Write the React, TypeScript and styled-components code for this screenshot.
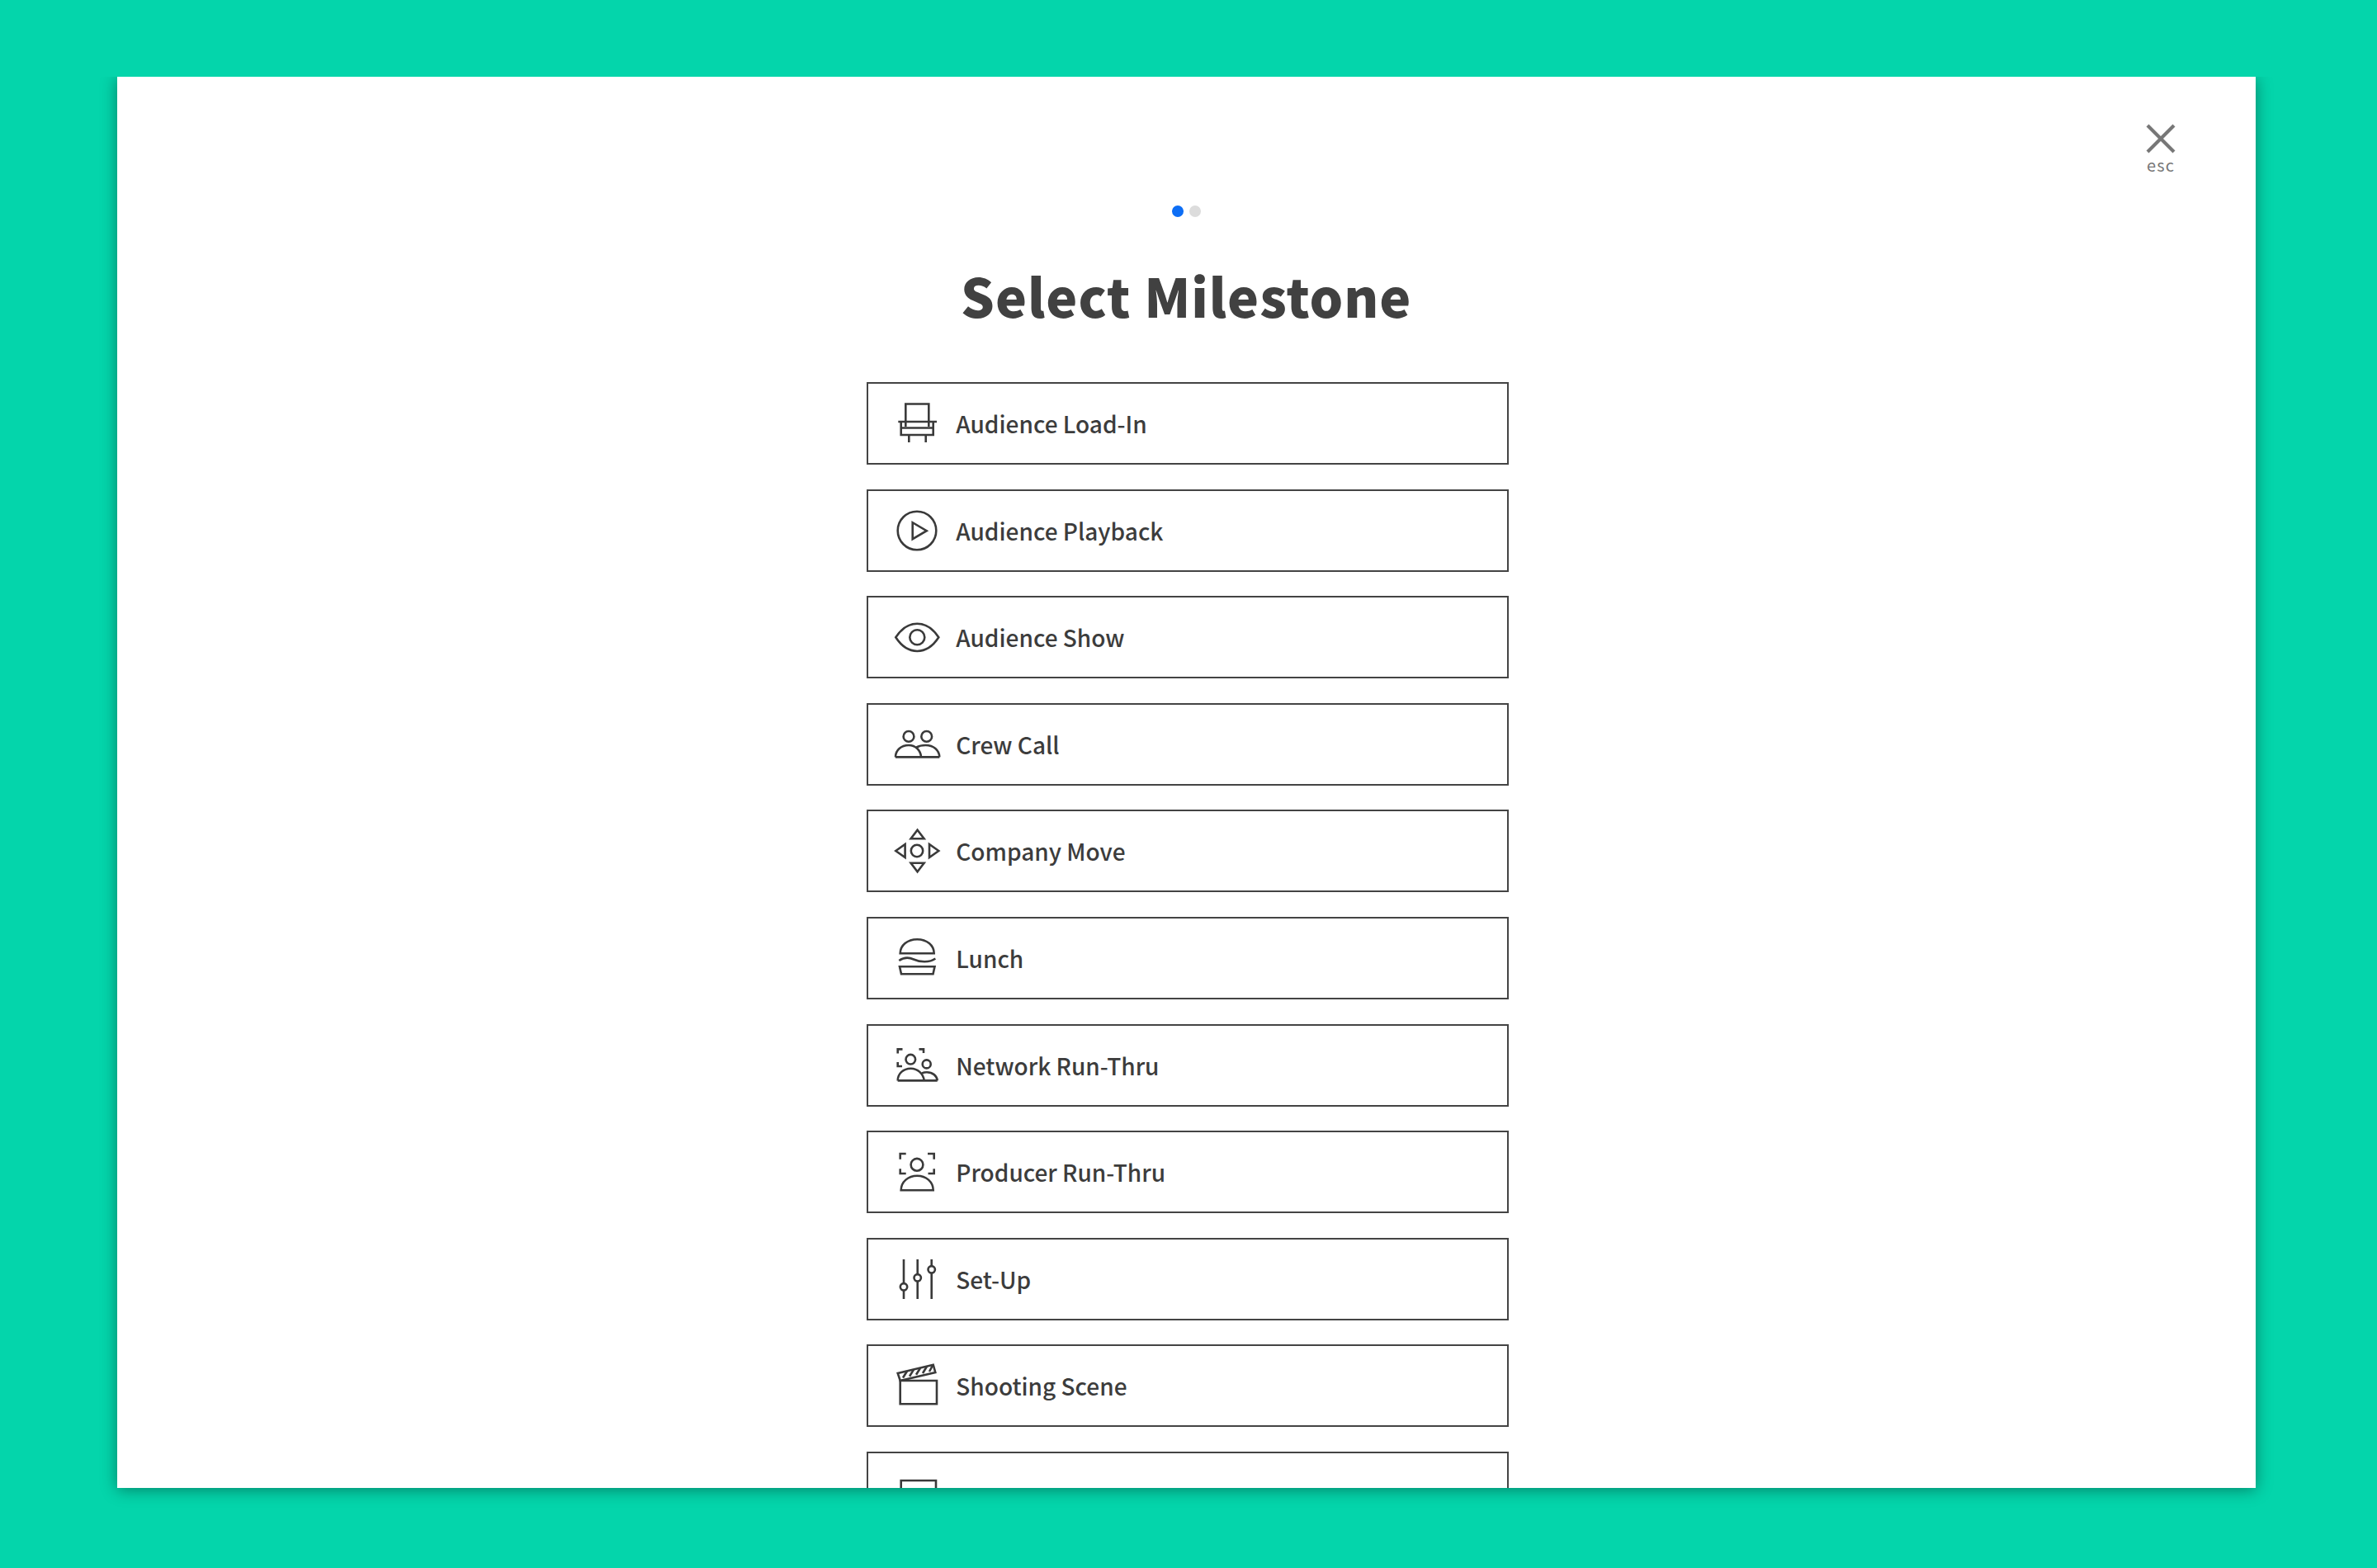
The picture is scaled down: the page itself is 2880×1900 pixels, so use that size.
import React from 'react';
import styled, { createGlobalStyle } from 'styled-components';

const GlobalStyle = createGlobalStyle`
  html, body {
    margin: 0;
    padding: 0;
  }
  body {
    background: #04d5ab;
    font-family: "Noto Sans CJK JP", "Noto Sans", sans-serif;
  }
`;

const Page = styled.div`
  width: 2880px;
  height: 1900px;
  padding: 93px 147px 97px 141.5px;
  box-sizing: border-box;
  overflow: hidden;
  background: #04d5ab;
`;

const Modal = styled.div`
  position: relative;
  height: 100%;
  background: #fff;
  overflow: hidden;
  box-shadow: 0 2px 18px rgba(0, 0, 0, 0.4);
  display: flex;
  flex-direction: column;
  align-items: center;
  padding-top: 156px;
  box-sizing: border-box;
  clip-path: inset(0 -40px -40px -40px);
`;

const CloseButton = styled.div`
  position: absolute;
  top: 57px;
  right: 90px;
  width: 50px;
  display: flex;
  flex-direction: column;
  align-items: center;
  color: #777;
`;

const CloseLabel = styled.span`
  font-size: 20px;
  line-height: 24px;
  letter-spacing: 1.2px;
  margin-top: 2px;
`;

const Dots = styled.div`
  display: flex;
  gap: 7px;
`;

const Dot = styled.span<{ $active?: boolean }>`
  width: 14px;
  height: 14px;
  border-radius: 50%;
  background: ${({ $active }) => ($active ? '#0d6ef5' : '#dcdcdc')};
`;

const Title = styled.h1`
  margin: 50px 0 0;
  height: 88px;
  font-size: 64px;
  line-height: 88px;
  font-weight: 900;
  letter-spacing: 1px;
  color: #414141;
`;

const List = styled.div`
  margin-top: 62px;
  margin-left: 4px;
  display: flex;
  flex-direction: column;
  gap: 29.6px;
  flex-shrink: 0;
`;

const Row = styled.div`
  width: 778px;
  height: 100px;
  box-sizing: border-box;
  border: 2px solid #444;
  display: flex;
  align-items: center;
  flex-shrink: 0;
  padding-left: 29px;
  gap: 17px;
  background: #fff;
`;

const IconBox = styled.svg`
  width: 60px;
  height: 60px;
  flex-shrink: 0;
  fill: none;
  stroke: #3a3a3a;
  stroke-width: 2.6;
`;

const Label = styled.span`
  font-size: 28px;
  line-height: 40px;
  font-weight: 500;
  color: #3c3c3c;
`;

const icons: Record<string, React.ReactNode> = {
  chair: (
    <>
      <path d="M16.3 34V6.5H44.3V34" />
      <path d="M7.3 28H54" />
      <path d="M10.7 28V44H49.7V28" />
      <path d="M10.7 35.5H49.7" />
      <path d="M20.3 44V53M40.7 44V53" />
    </>
  ),
  play: (
    <>
      <circle cx="30" cy="30" r="23.3" />
      <path d="M24.7 20.2V40.2L41.7 30.2Z" />
    </>
  ),
  eye: (
    <>
      <path d="M4.3 30.3C11 20 20 13.8 30.3 13.8C40.6 13.8 49.6 20 56.3 30.3C49.6 40.6 40.6 47 30.3 47C20 47 11 40.6 4.3 30.3Z" />
      <circle cx="30.3" cy="30.3" r="9" />
    </>
  ),
  crew: (
    <>
      <circle cx="20" cy="20.4" r="6.4" />
      <circle cx="41.7" cy="20.4" r="6.4" />
      <path d="M4 45.4H57.3" />
      <path d="M4 45.4C4 37 11 31 20 31C28 31 34.5 37 35 45.4" />
      <path d="M29.5 33.5C32.5 31.8 36.5 31 40.5 31C50 31 57 37 57.3 45.4" />
    </>
  ),
  move: (
    <>
      <circle cx="30" cy="30" r="7.2" />
      <path d="M30.6 4.7L38.6 15.3H22.6Z" />
      <path d="M30.6 55.3L38.6 44.7H22.6Z" />
      <path d="M4.3 30L15.6 22V38Z" />
      <path d="M56.3 30L45 22V38Z" />
    </>
  ),
  burger: (
    <>
      <path d="M9.7 24.3C9.7 14.5 18.5 7.2 30.2 7.2C42 7.2 50.7 14.5 50.7 24.3Z" />
      <path d="M8.3 33C14 29 20 28.8 26 31.5C33 34.8 45 36 52.3 30.5" />
      <path d="M9 40.3H51.5L49.5 49.3H11Z" />
    </>
  ),
  network: (
    <>
      <circle cx="22.3" cy="22.7" r="5.8" />
      <circle cx="41.7" cy="28.4" r="5" />
      <path d="M6.7 15.5V10.4H12.5M32.5 10.4H38V15M6.7 26V31H12" />
      <path d="M6.7 48.4H54.7" />
      <path d="M6.7 48.4C6.7 40 13.5 33.7 22.5 33.7C31 33.7 37.5 40 38.8 48.4" />
      <path d="M36 39.5C38 38.6 40 38.3 42 38.3C49 38.3 54.2 42.5 54.7 48.4" />
    </>
  ),
  producer: (
    <>
      <circle cx="30" cy="21.3" r="7.4" />
      <path d="M16.7 8H9.7V14.7M43 8H50.7V14.7M9.7 26.3V32H16.7M50.7 26.3V32H43.5" />
      <path d="M10.7 52.3H49.7C49.7 42 41 34.7 30.2 34.7C19.5 34.7 10.7 42 10.7 52.3Z" />
    </>
  ),
  sliders: (
    <>
      <path d="M14 6V35M14 43.5V54" />
      <path d="M30.7 6V24M30.7 32.5V54" />
      <path d="M47.7 6V14M47.7 22.5V54" />
      <circle cx="14" cy="39.3" r="4.2" />
      <circle cx="30.7" cy="28.3" r="4.2" />
      <circle cx="47.7" cy="18.3" r="4.2" />
    </>
  ),
  clapper: (
    <>
      <path d="M9.7 24H54V52.3H9.7Z" />
      <path d="M6.7 15L49.7 4.7L52.3 14L9.7 24Z" />
      <path d="M13 20.5L18 12.5M21 18.8L26 10.6M29 16.8L34 8.7M37 15L42 6.8M45 13L49 5.5" />
    </>
  ),
  monitor: <path d="M10.7 15H53V48H10.7Z" />,
};

const Icon = ({ name }: { name: string }) => (
  <IconBox viewBox="0 0 60 60">{icons[name]}</IconBox>
);

const milestones = [
  { icon: 'chair', label: 'Audience Load-In' },
  { icon: 'play', label: 'Audience Playback' },
  { icon: 'eye', label: 'Audience Show' },
  { icon: 'crew', label: 'Crew Call' },
  { icon: 'move', label: 'Company Move' },
  { icon: 'burger', label: 'Lunch' },
  { icon: 'network', label: 'Network Run-Thru' },
  { icon: 'producer', label: 'Producer Run-Thru' },
  { icon: 'sliders', label: 'Set-Up' },
  { icon: 'clapper', label: 'Shooting Scene' },
  { icon: 'monitor', label: '' },
];

function App(): JSX.Element {
  return (
    <Page>
      <GlobalStyle />
      <Modal>
        <CloseButton>
          <svg width="36" height="36" viewBox="0 0 36 36" fill="none" stroke="#777" strokeWidth="4.2">
            <path d="M2 2L34 34M34 2L2 34" />
          </svg>
          <CloseLabel>esc</CloseLabel>
        </CloseButton>
        <Dots>
          <Dot $active />
          <Dot />
        </Dots>
        <Title>Select Milestone</Title>
        <List>
          {milestones.map((item) => (
            <Row key={item.icon}>
              <Icon name={item.icon} />
              <Label>{item.label}</Label>
            </Row>
          ))}
        </List>
      </Modal>
    </Page>
  );
}

export default App;
